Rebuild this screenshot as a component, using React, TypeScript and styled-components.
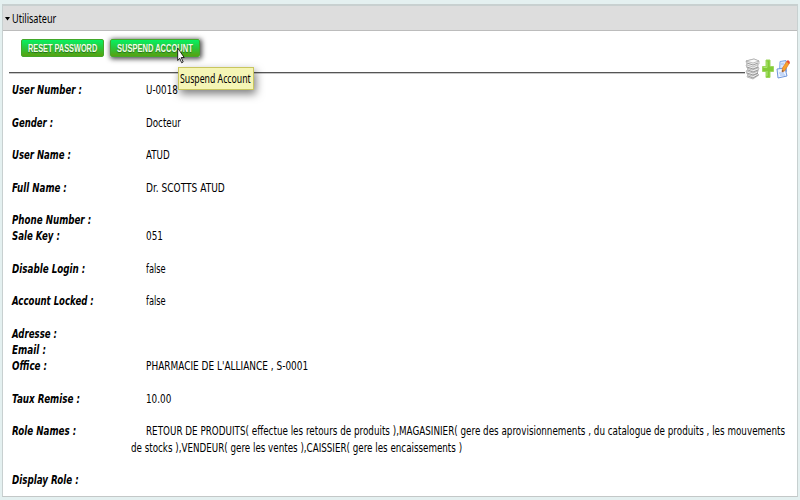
import React, { useLayoutEffect, useRef, useState } from "react";
import styled, { createGlobalStyle } from "styled-components";

const Global = createGlobalStyle`
  * { box-sizing: border-box; }
  html, body { margin: 0; height: 500px; overflow: hidden; background: #e4f0f0; }
  body { font-family: "DejaVu Sans", sans-serif; color: #000; }
`;

const Page = styled.main`
  width: 800px;
  height: 500px;
  padding: 4px 2px 3px;
  background: #e4f0f0;
`;

const Panel = styled.section`
  height: 493px;
  background: #fff;
  border: 1px solid #c8d0d0;
  border-top-width: 2px;
  border-bottom-color: #c4c8c8;
  display: flex;
  flex-direction: column;
  overflow: hidden;
`;

const Header = styled.header`
  height: 25px;
  flex: none;
  display: flex;
  align-items: center;
  padding: 1px 0 0 2px;
  background: #ddd;
  border-bottom: 1px solid #bcbcbc;
  font-family: "Noto Sans", sans-serif;
  font-size: 12px;
`;

const Arrow = styled.svg`
  width: 5px;
  height: 4px;
  margin-right: 2px;
  flex: none;
`;

const Squeezed = styled.span`
  display: inline-block;
  white-space: pre;
  transform-origin: 0 50%;
`;

const Clip = styled.span<{ $w: number }>`
  display: block;
  flex: none;
  width: ${(p) => p.$w}px;
  white-space: pre;
`;

/* Condenses a line of text horizontally to the given width. */
function Fit({ w, children }: { w: number; children: string }) {
  const ref = useRef<HTMLSpanElement>(null);
  const [scale, setScale] = useState(1);
  useLayoutEffect(() => {
    if (ref.current) setScale(w / ref.current.offsetWidth);
  }, [w, children]);
  return (
    <Clip $w={w}>
      <Squeezed ref={ref} style={{ transform: `scaleX(${scale})` }}>{children}</Squeezed>
    </Clip>
  );
}

const Actions = styled.div`
  height: 28px;
  flex: none;
  padding: 8px 0 0 18px;
  display: flex;
  gap: 6px;
`;

const Button = styled.button<{ $w: number; $hover?: boolean }>`
  width: ${(p) => p.$w}px;
  height: 18px;
  padding: 1px 0 0;
  display: flex;
  align-items: center;
  justify-content: center;
  border: 1px solid #42a82a;
  border-radius: 2px;
  background: linear-gradient(#08f060, #28c83c 48%, #58a010);
  color: #f0ffe8;
  font: bold 10px/16px "Liberation Sans", sans-serif;
  text-shadow: 0 1px 1px #276b18;
  box-shadow: ${(p) => (p.$hover ? "1px 1px 5px 1px rgba(0,0,0,.7)" : "none")};
`;

const Anchor = styled.div`
  position: relative;
`;

const Tooltip = styled.div`
  position: absolute;
  z-index: 2;
  left: 68px;
  top: 28px;
  width: 76px;
  height: 23px;
  padding-left: 1px;
  background: #f5f5b5;
  border: 1px solid #c9c65e;
  box-shadow: 2px 4px 9px rgba(0, 0, 0, 0.5);
  font-family: "Noto Sans", sans-serif;
  font-size: 12.5px;
  line-height: 21px;
`;

const Pointer = styled.svg`
  position: absolute;
  z-index: 3;
  left: 67px;
  top: 8px;
  width: 8px;
  height: 17px;
`;

const Tools = styled.div`
  height: 22px;
  flex: none;
  padding-left: 6px;
  display: flex;
`;

const Rule = styled.div`
  width: 736px;
  height: 1px;
  margin-top: 13px;
  background: #555;
  box-shadow: 0 1px 0 #c8c8c8;
`;

const ToolIcon = styled.svg<{ $w: number; $gap: number }>`
  width: ${(p) => p.$w}px;
  height: 22px;
  margin: -1px 0 0 ${(p) => p.$gap}px;
  flex: none;
`;

const Details = styled.dl`
  margin: 0;
  padding: 1px 0 0 9px;
  font-size: 12px;
  line-height: 16.25px;
`;

const Row = styled.div<{ $lines: number }>`
  height: ${(p) => p.$lines * 16.25}px;
  display: grid;
  grid-template-columns: 119px minmax(0, 1fr);
`;

const Label = styled.dt`
  font-weight: bold;
  font-style: italic;
`;

const Value = styled.dd`
  margin: 0;
`;

const FirstLine = styled.div`
  padding-left: 15px;
`;

type Field = { label: string; lw: number; lines: number; value?: string; vw?: number; more?: string; mw?: number };

const fields: Field[] = [
  { label: "User Number :", lw: 70, lines: 2, value: "U-0018", vw: 32 },
  { label: "Gender :", lw: 41, lines: 2, value: "Docteur", vw: 35 },
  { label: "User Name :", lw: 59, lines: 2, value: "ATUD", vw: 24 },
  { label: "Full Name :", lw: 55, lines: 2, value: "Dr. SCOTTS ATUD", vw: 79 },
  { label: "Phone Number :", lw: 79, lines: 1 },
  { label: "Sale Key :", lw: 48, lines: 2, value: "051", vw: 17 },
  { label: "Disable Login :", lw: 73, lines: 2, value: "false", vw: 20 },
  { label: "Account Locked :", lw: 82, lines: 2, value: "false", vw: 20 },
  { label: "Adresse :", lw: 45, lines: 1 },
  { label: "Email :", lw: 34, lines: 1 },
  { label: "Office :", lw: 35, lines: 2, value: "PHARMACIE DE L'ALLIANCE , S-0001", vw: 162 },
  { label: "Taux Remise :", lw: 68, lines: 2, value: "10.00", vw: 25 },
  {
    label: "Role Names :", lw: 64, lines: 3,
    value: "RETOUR DE PRODUITS( effectue les retours de produits ),MAGASINIER( gere des aprovisionnements , du catalogue de produits , les mouvements",
    vw: 639,
    more: "de stocks ),VENDEUR( gere les ventes ),CAISSIER( gere les encaissements )",
    mw: 331,
  },
  { label: "Display Role :", lw: 67, lines: 1 },
];

function Papers() {
  return (
    <ToolIcon $w={15} $gap={0} viewBox="0 0 15 22">
      <g stroke="#999" strokeWidth=".6" fill="#eee">
        <path d="M3 16l8-2 3 3-6 4-6-2z" />
        <path d="M1 13l8-2 4 2-1 3-5 2-5-2z" />
        <path d="M3 10l8-2 3 2-1 3-5 2-6-2z" />
        <path d="M1 7l8-2 4 2v3l-6 2-5-2z" />
        <path d="M1 3l8-2 5 2v3L8 9 2 7z" />
        <path d="M1 3l8-2 5 2-6 2z" fill="#fafafa" />
      </g>
      <path d="M2 5l6 2 5-2M2 9l6 2 5-2M3 12l5 2 5-2M2 15l6 2 5-2M3 18l5 2 5-3" fill="none" stroke="#858585" strokeWidth=".8" />
    </ToolIcon>
  );
}

function Plus() {
  return (
    <ToolIcon $w={12} $gap={2} viewBox="0 0 12 22">
      <path d="M4 2h4v6.500h3.500v5H8V19.500H4v-6H.5v-5H4z" fill="#84cc38" stroke="#9ed75e" />
      <path d="M5 3.500v6H1.500M5 13v5" fill="none" stroke="#ace775" />
    </ToolIcon>
  );
}

function Edit() {
  return (
    <ToolIcon $w={14} $gap={2} viewBox="0 0 14 22">
      <path d="M4 3.500l6-1 .5 11-7 1z" fill="#d9e6fd" stroke="#7da5e7" />
      <path d="M1 11l8-1 2 8-9 2z" fill="#edf4ff" stroke="#7096dc" />
      <path d="M3 15h5M4 17h5M5 6h3" stroke="#9bbaf0" />
      <path d="M11 3l2.500 2-5 8-2.500 1 .5-4z" fill="#f6a32c" stroke="#e3752c" strokeWidth=".7" />
      <path d="M10.500 3.500L12 2l2 2-1 2z" fill="#e84b37" />
      <path d="M6 14l.4-2.200 1.400 1.200z" fill="#625045" />
    </ToolIcon>
  );
}

export default function App() {
  return (
    <>
      <Global />
      <Page>
        <Panel>
          <Header>
            <Arrow viewBox="0 0 5 4"><path d="M0 0h5L2.500 3.500z" /></Arrow>
            <Fit w={44}>Utilisateur</Fit>
          </Header>
          <Actions>
            <Button $w={83}><Fit w={69}>RESET PASSWORD</Fit></Button>
            <Anchor>
              <Button $w={90} $hover><Fit w={76}>SUSPEND ACCOUNT</Fit></Button>
              <Tooltip><Fit w={71}>Suspend Account</Fit></Tooltip>
              <Pointer viewBox="0 0 8 17">
                <path d="M.7 1v12.500l2-2.300 2 4.600 1.500-.8-2-4.500h3z" fill="#fff" stroke="#000" strokeWidth=".8" />
              </Pointer>
            </Anchor>
          </Actions>
          <Tools>
            <Rule />
            <Papers />
            <Plus />
            <Edit />
          </Tools>
          <Details>
            {fields.map((f) => (
              <Row key={f.label} $lines={f.lines}>
                <Label><Fit w={f.lw}>{f.label}</Fit></Label>
                <Value>
                  {f.value && <FirstLine><Fit w={f.vw!}>{f.value}</Fit></FirstLine>}
                  {f.more && <Fit w={f.mw!}>{f.more}</Fit>}
                </Value>
              </Row>
            ))}
          </Details>
        </Panel>
      </Page>
    </>
  );
}
